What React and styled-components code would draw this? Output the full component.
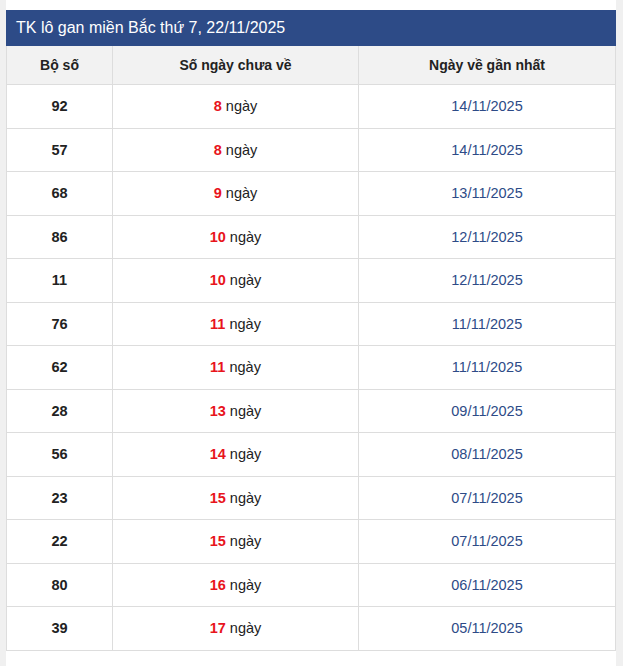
import React from 'react';
import styled, { createGlobalStyle } from 'styled-components';

const GlobalStyle = createGlobalStyle`
  html, body {
    margin: 0;
    padding: 0;
    background: #f0f0f0;
    font-family: "Liberation Sans", Arial, sans-serif;
  }
`;

const Page = styled.div`
  margin-left: 6px;
  width: 610px;
  min-height: 666px;
  background: #fff;
  padding-top: 10px;
  box-sizing: border-box;
`;

const TitleBar = styled.div`
  background: #2d4b87;
  color: #fff;
  height: 36px;
  display: flex;
  align-items: center;
  padding: 0 10px;
  font-size: 16px;
`;

const Table = styled.table`
  width: 100%;
  border-collapse: collapse;
  table-layout: fixed;
`;

const HeadCell = styled.th`
  background: #f2f2f2;
  border: 1px solid #ddd;
  border-top: none;
  height: 38px;
  padding: 0;
  font-size: 14px;
  font-weight: bold;
  color: #222;
  width: ${p => p.$w || 'auto'};
`;

const Cell = styled.td`
  border: 1px solid #ddd;
  height: 42.5px;
  padding: 0;
  text-align: center;
  font-size: 14.5px;
  color: ${p => (p.$date ? '#2d4b87' : '#222')};
  font-weight: ${p => (p.$bold ? 'bold' : 'normal')};
`;

const Days = styled.b`
  color: #e8141c;
`;

const rows = [
  ['92', 8, '14/11/2025'],
  ['57', 8, '14/11/2025'],
  ['68', 9, '13/11/2025'],
  ['86', 10, '12/11/2025'],
  ['11', 10, '12/11/2025'],
  ['76', 11, '11/11/2025'],
  ['62', 11, '11/11/2025'],
  ['28', 13, '09/11/2025'],
  ['56', 14, '08/11/2025'],
  ['23', 15, '07/11/2025'],
  ['22', 15, '07/11/2025'],
  ['80', 16, '06/11/2025'],
  ['39', 17, '05/11/2025'],
];

export default function App() {
  return (
    <>
      <GlobalStyle />
      <Page>
        <TitleBar>TK lô gan miền Bắc thứ 7, 22/11/2025</TitleBar>
        <Table>
          <thead>
            <tr>
              <HeadCell $w="105px">Bộ số</HeadCell>
              <HeadCell $w="245px">Số ngày chưa về</HeadCell>
              <HeadCell>Ngày về gần nhất</HeadCell>
            </tr>
          </thead>
          <tbody>
            {rows.map(([num, days, date]) => (
              <tr key={num}>
                <Cell $bold>{num}</Cell>
                <Cell><Days>{days}</Days> ngày</Cell>
                <Cell $date>{date}</Cell>
              </tr>
            ))}
          </tbody>
        </Table>
      </Page>
    </>
  );
}
